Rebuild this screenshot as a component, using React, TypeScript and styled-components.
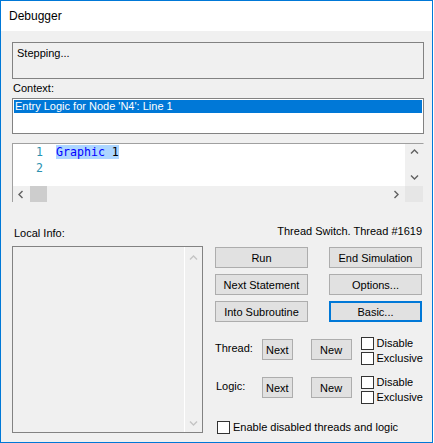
import React from "react";
import styled, { createGlobalStyle } from "styled-components";

const GlobalStyle = createGlobalStyle`
  html, body { margin: 0; padding: 0; background: #fff; }
  body { font-family: "Liberation Sans", Arial, sans-serif; font-size: 11px; color: #000; }
  * { box-sizing: border-box; }
`;

const Window = styled.div`
  width: 433px;
  height: 443px;
  border: 1px solid #0078d7;
  background: #f0f0f0;
  display: flex;
  flex-direction: column;
`;

const TitleBar = styled.div`
  height: 30px;
  flex: none;
  background: #fff;
  padding-left: 8px;
  font-size: 12px;
  line-height: 30px;
`;

const Body = styled.div`
  flex: 1;
  padding: 11px 8px 0 11px;
  display: flex;
  flex-direction: column;
`;

const StatusBox = styled.div`
  height: 37px;
  border: 1px solid #828282;
  padding: 3px 4px;
  line-height: 15px;
`;

const FieldLabel = styled.div`
  height: 19px;
  line-height: 19px;
  padding-left: 1px;
`;

const ListBox = styled.div`
  height: 36px;
  background: #fff;
  border: 1px solid #828282;
  padding: 1px;
`;

const SelectedItem = styled.div`
  height: 13px;
  line-height: 13px;
  background: #0078d7;
  color: #fff;
  padding-left: 1px;
`;

const Editor = styled.div`
  margin-top: 9px;
  height: 59px;
  display: grid;
  grid-template-columns: 1fr 18px;
  grid-template-rows: 42px 16px;
  border-top: 1px solid #a0a0a0;
  border-left: 1px solid #a0a0a0;
  border-right: 1px solid #f0f0f0;
`;

const CodeArea = styled.div`
  background: #fff;
  font-family: "DejaVu Sans Mono", "Liberation Mono", monospace;
  font-size: 11.6px;
  line-height: 16px;
  overflow: hidden;
`;

const CodeLine = styled.div`
  display: flex;
  height: 16px;
`;

const LineNo = styled.span`
  width: 30px;
  text-align: right;
  color: #2b91af;
`;

const LineText = styled.span`
  margin-left: 13px;
  white-space: pre;
`;

const Selection = styled.span`
  background: #add6ff;
`;

const Keyword = styled.span`
  color: #0000ff;
`;

const VScroll = styled.div`
  background: #f0f0f0;
  display: flex;
  flex-direction: column;
  justify-content: space-between;
`;

const HScroll = styled.div`
  background: #f0f0f0;
  display: flex;
`;

const ArrowBtn = styled.div<{ $w?: number; $h?: number; $pt?: number }>`
  width: ${(p) => (p.$w ? `${p.$w}px` : "auto")};
  height: ${(p) => (p.$h ? `${p.$h}px` : "auto")};
  flex: none;
  display: flex;
  align-items: center;
  justify-content: center;
  padding-top: ${(p) => p.$pt ?? 0}px;
`;

const Thumb = styled.div`
  width: 17px;
  flex: none;
  background: #cdcdcd;
`;

const Spacer = styled.div`
  flex: 1;
`;

const Corner = styled.div`
  background: #e6e6e6;
`;

const Lower = styled.div`
  margin-top: 22px;
  display: flex;
  gap: 12px;
`;

const LeftCol = styled.div`
  width: 191px;
  display: flex;
  flex-direction: column;
`;

const LocalLabel = styled.div`
  height: 18px;
  line-height: 18px;
  padding-left: 2px;
`;

const InfoList = styled.div`
  margin-top: 4px;
  height: 187px;
  border: 1px solid #828282;
  background: #f0f0f0;
  display: flex;
`;

const InfoContent = styled.div`
  flex: 1;
`;

const InfoScroll = styled.div`
  width: 18px;
  border-left: 1px solid #fff;
  display: flex;
  flex-direction: column;
  justify-content: space-between;
`;

const RightCol = styled.div`
  width: 208px;
  display: flex;
  flex-direction: column;
`;

const InfoText = styled.div`
  height: 14px;
  line-height: 14px;
  text-align: right;
  padding-right: 1px;
`;

const ButtonGrid = styled.div`
  margin-top: 9px;
  display: grid;
  grid-template-columns: 93px 93px;
  column-gap: 21px;
  row-gap: 6px;
`;

const Button = styled.div<{ $focused?: boolean }>`
  height: 21px;
  background: #e1e1e1;
  border: ${(p) => (p.$focused ? "2px solid #0078d7" : "1px solid #adadad")};
  display: flex;
  align-items: center;
  justify-content: center;
`;

const ControlRow = styled.div<{ $top: number; $left?: number }>`
  margin-top: ${(p) => p.$top}px;
  margin-left: ${(p) => p.$left ?? 0}px;
  display: flex;
  align-items: flex-start;
`;

const RowLabel = styled.div<{ $top: number; $indent?: number }>`
  width: 47px;
  line-height: 21px;
  margin-top: ${(p) => p.$top}px;
  padding-left: ${(p) => p.$indent ?? 0}px;
`;

const SmallButton = styled(Button)<{ $w: number; $top: number; $gap?: number }>`
  width: ${(p) => p.$w}px;
  margin-top: ${(p) => p.$top}px;
  margin-left: ${(p) => p.$gap ?? 0}px;
`;

const CheckStack = styled.div`
  margin-left: 9px;
  display: flex;
  flex-direction: column;
  gap: 2px;
`;

const CheckItem = styled.div`
  display: flex;
  align-items: center;
  gap: 3px;
  height: 13px;
  line-height: 13px;
`;

const CheckBox = styled.span`
  width: 13px;
  height: 13px;
  flex: none;
  background: #fff;
  border: 1px solid #333;
`;

type Dir = "up" | "down" | "left" | "right";

const chevronPaths: Record<Dir, string> = {
  up: "M1 5.5 L4.5 2 L8 5.5",
  down: "M1 2.5 L4.5 6 L8 2.5",
  left: "M5.5 1 L2 4.5 L5.5 8",
  right: "M2.5 1 L6 4.5 L2.5 8",
};

function Chevron({ dir, color = "#606060" }: { dir: Dir; color?: string }) {
  return (
    <svg width="9" height="9" viewBox="0 0 9 9">
      <path d={chevronPaths[dir]} fill="none" stroke={color} strokeWidth="1.4" />
    </svg>
  );
}

function Check({ label }: { label: string }) {
  return (
    <CheckItem>
      <CheckBox />
      <span>{label}</span>
    </CheckItem>
  );
}

export default function App() {
  return (
    <>
      <GlobalStyle />
      <Window>
        <TitleBar>Debugger</TitleBar>
        <Body>
          <StatusBox>Stepping...</StatusBox>
          <FieldLabel>Context:</FieldLabel>
          <ListBox>
            <SelectedItem>Entry Logic for Node 'N4': Line 1</SelectedItem>
          </ListBox>
          <Editor>
            <CodeArea>
              <CodeLine>
                <LineNo>1</LineNo>
                <LineText>
                  <Selection>
                    <Keyword>Graphic</Keyword> 1
                  </Selection>
                </LineText>
              </CodeLine>
              <CodeLine>
                <LineNo>2</LineNo>
                <LineText />
              </CodeLine>
            </CodeArea>
            <VScroll>
              <ArrowBtn $h={17}>
                <Chevron dir="up" />
              </ArrowBtn>
              <ArrowBtn $h={17}>
                <Chevron dir="down" />
              </ArrowBtn>
            </VScroll>
            <HScroll>
              <ArrowBtn $w={17}>
                <Chevron dir="left" />
              </ArrowBtn>
              <Thumb />
              <Spacer />
              <ArrowBtn $w={17}>
                <Chevron dir="right" />
              </ArrowBtn>
            </HScroll>
            <Corner />
          </Editor>
          <Lower>
            <LeftCol>
              <LocalLabel>Local Info:</LocalLabel>
              <InfoList>
                <InfoContent />
                <InfoScroll>
                  <ArrowBtn $h={20} $pt={2}>
                    <Chevron dir="up" color="#c4c4c4" />
                  </ArrowBtn>
                  <ArrowBtn $h={17}>
                    <Chevron dir="down" color="#c4c4c4" />
                  </ArrowBtn>
                </InfoScroll>
              </InfoList>
            </LeftCol>
            <RightCol>
              <InfoText>Thread Switch. Thread #1619</InfoText>
              <ButtonGrid>
                <Button>Run</Button>
                <Button>End Simulation</Button>
                <Button>Next Statement</Button>
                <Button>Options...</Button>
                <Button>Into Subroutine</Button>
                <Button $focused>Basic...</Button>
              </ButtonGrid>
              <ControlRow $top={15}>
                <RowLabel $top={1}>Thread:</RowLabel>
                <SmallButton $w={31} $top={2}>Next</SmallButton>
                <SmallButton $w={41} $top={2} $gap={18}>New</SmallButton>
                <CheckStack>
                  <Check label="Disable" />
                  <Check label="Exclusive" />
                </CheckStack>
              </ControlRow>
              <ControlRow $top={11}>
                <RowLabel $top={0} $indent={1}>Logic:</RowLabel>
                <SmallButton $w={31} $top={1}>Next</SmallButton>
                <SmallButton $w={41} $top={1} $gap={18}>New</SmallButton>
                <CheckStack>
                  <Check label="Disable" />
                  <Check label="Exclusive" />
                </CheckStack>
              </ControlRow>
              <ControlRow $top={17} $left={2}>
                <Check label="Enable disabled threads and logic" />
              </ControlRow>
            </RightCol>
          </Lower>
        </Body>
      </Window>
    </>
  );
}
